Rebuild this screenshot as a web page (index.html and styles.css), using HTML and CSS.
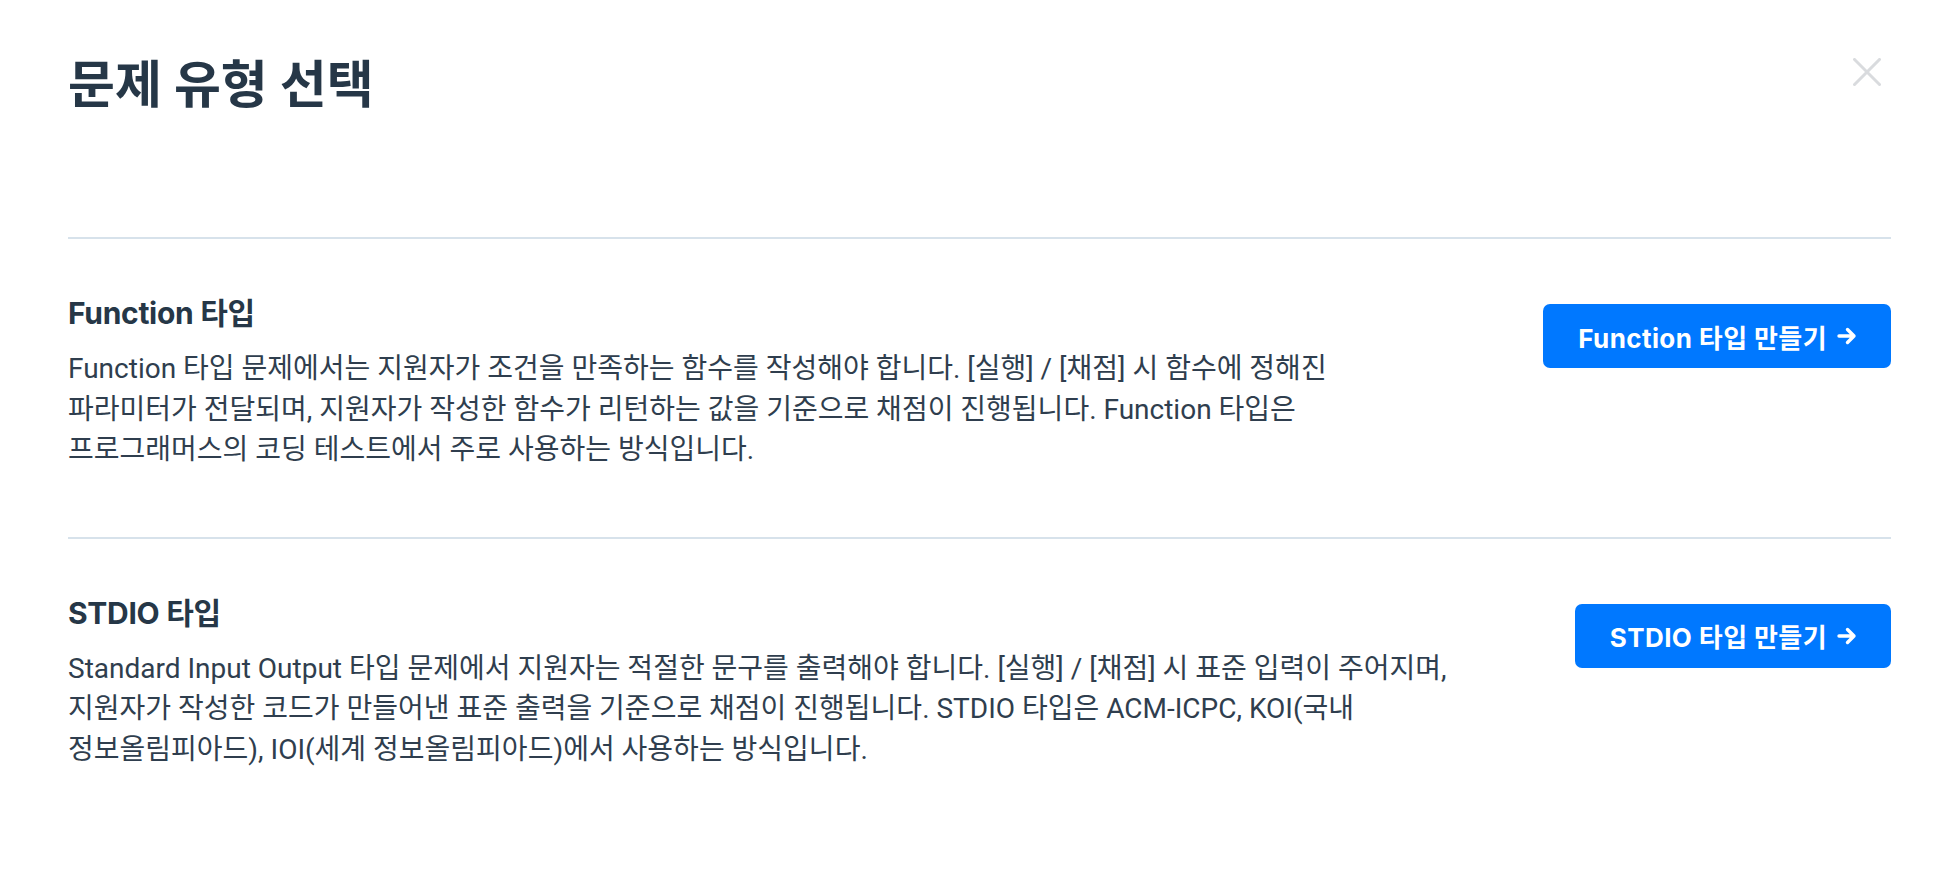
FILE: index.html
```html
<!DOCTYPE html>
<html lang="ko">
<head>
<meta charset="utf-8">
<title>문제 유형 선택</title>
<link rel="stylesheet" href="styles.css">
</head>
<body>
<div class="modal">
  <header class="modal-header">
    <h1 class="modal-title">문제 유형 선택</h1>
    <button class="close-btn" type="button" aria-label="닫기">
      <svg width="28" height="28" viewBox="0 0 28 28"><path d="M1.5 1.5 L26.5 26.5 M26.5 1.5 L1.5 26.5" stroke="#d9dbde" stroke-width="3" stroke-linecap="square" fill="none"/></svg>
    </button>
  </header>

  <section class="type-row">
    <div class="type-text">
      <h2 class="type-title">Function 타입</h2>
      <p class="type-desc">Function 타입 문제에서는 지원자가 조건을 만족하는 함수를 작성해야 합니다. [실행] / [채점] 시 함수에 정해진 파라미터가 전달되며, 지원자가 작성한 함수가 리턴하는 값을 기준으로 채점이 진행됩니다. Function 타입은 프로그래머스의 코딩 테스트에서 주로 사용하는 방식입니다.</p>
    </div>
    <button class="make-btn" type="button">Function 타입 만들기<svg class="arrow" width="22" height="22" viewBox="0 0 22 22"><path d="M3 11 H18 M11.5 4.5 L18 11 L11.5 17.5" stroke="#fff" stroke-width="3.4" stroke-linecap="round" stroke-linejoin="round" fill="none"/></svg></button>
  </section>

  <section class="type-row last">
    <div class="type-text">
      <h2 class="type-title">STDIO 타입</h2>
      <p class="type-desc">Standard Input Output 타입 문제에서 지원자는 적절한 문구를 출력해야 합니다. [실행] / [채점] 시 표준 입력이 주어지며, 지원자가 작성한 코드가 만들어낸 표준 출력을 기준으로 채점이 진행됩니다. STDIO 타입은 ACM-ICPC, KOI(국내 정보올림피아드), IOI(세계 정보올림피아드)에서 사용하는 방식입니다.</p>
    </div>
    <button class="make-btn" type="button">STDIO 타입 만들기<svg class="arrow" width="22" height="22" viewBox="0 0 22 22"><path d="M3 11 H18 M11.5 4.5 L18 11 L11.5 17.5" stroke="#fff" stroke-width="3.4" stroke-linecap="round" stroke-linejoin="round" fill="none"/></svg></button>
  </section>
</div>
</body>
</html>
```

FILE: styles.css
```css
* { box-sizing: border-box; }

html, body {
  margin: 0;
  padding: 0;
  background: #ffffff;
}

body {
  font-family: Inter, "Noto Sans CJK KR", sans-serif;
  color: #263747;
  word-break: keep-all;
}

.modal {
  padding: 57px 57px 0 68px;
}

.modal-header {
  display: flex;
  justify-content: space-between;
  align-items: flex-start;
  padding-bottom: 124px;
  border-bottom: 2px solid #d7e2eb;
}

.modal-title {
  margin: 0;
  font-size: 51px;
  line-height: 56px;
  font-weight: 700;
  color: #263747;
}

.close-btn {
  margin: 1px 10px 0 0;
  padding: 0;
  border: 0;
  background: none;
  width: 28px;
  height: 28px;
  cursor: pointer;
}

.close-btn svg { display: block; }

.type-row {
  display: flex;
  align-items: flex-start;
  gap: 86px;
  padding: 55px 0 66px;
  border-bottom: 2px solid #d7e2eb;
}

.type-row.last {
  border-bottom: 0;
}

.type-text {
  flex: 1;
  min-width: 0;
}

.type-title {
  margin: 0 0 16px;
  font-size: 30px;
  line-height: 39px;
  font-weight: 700;
  color: #263747;
  letter-spacing: -0.3px;
}

.type-desc {
  margin: 0;
  font-family: Roboto, "Noto Sans CJK KR", sans-serif;
  font-size: 28px;
  line-height: 40.5px;
  font-weight: 400;
  color: #2f3e4e;
}

.make-btn {
  flex: none;
  display: flex;
  align-items: center;
  justify-content: center;
  margin-top: 10px;
  height: 64px;
  padding: 0 33px 0 35px;
  border: 0;
  border-radius: 7px;
  background: #0078ff;
  color: #ffffff;
  font-family: Inter, "Noto Sans CJK KR", sans-serif;
  font-size: 26px;
  font-weight: 700;
  letter-spacing: 0.4px;
  cursor: pointer;
}

.make-btn .arrow {
  margin-left: 9px;
  display: block;
}
```
